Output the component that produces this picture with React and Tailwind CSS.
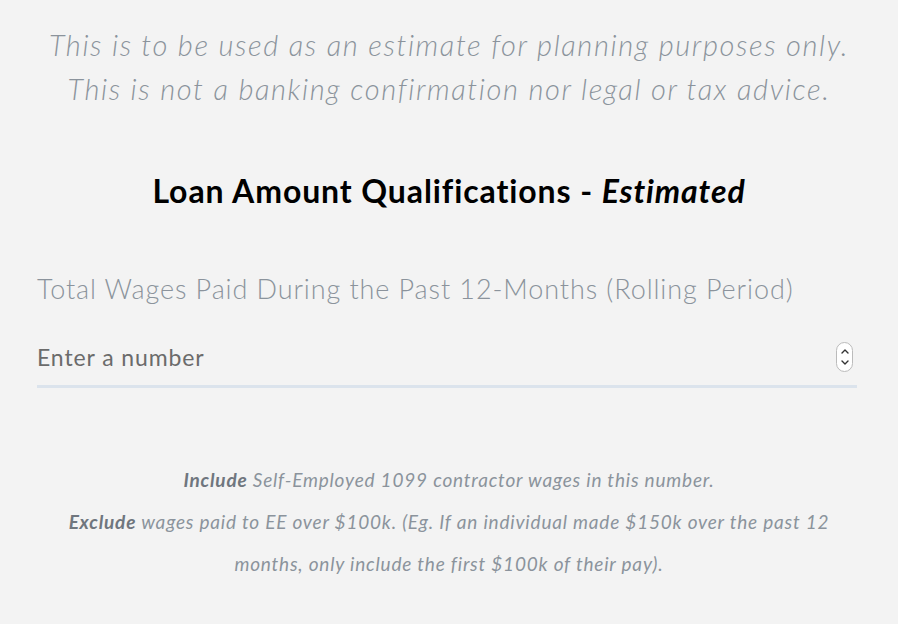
export default function App() {
  return (
    <div className="min-h-[624px] w-full bg-[#f3f3f3] font-['Lato',sans-serif] text-[#222]">
      <div className="pt-[23px] text-center text-[29px] font-light italic leading-[44px] tracking-[1.6px] text-[#8b939c]">
        <p>This is to be used as an estimate for planning purposes only.</p>
        <p>This is not a banking confirmation nor legal or tax advice.</p>
      </div>

      <h2 className="mt-[60px] text-center text-[32px] font-bold leading-[40px] tracking-[0.9px] text-black">
        Loan Amount Qualifications - <span className="italic">Estimated</span>
      </h2>

      <div className="ml-[37px] mr-[41px] mt-[60px]">
        <label className="block text-[27px] font-light leading-[36px] tracking-[0.9px] text-[#8b939c]">
          Total Wages Paid During the Past 12-Months (Rolling Period)
        </label>
        <div className="mt-[35px] flex items-center justify-between border-b-[3px] border-[#dbe3ec] pb-[13px]">
          <span className="text-[23px] leading-[30px] tracking-[0.9px] text-[#6b6b6b]">Enter a number</span>
          <div className="mr-[4px] flex h-[30px] w-[17px] flex-col items-center justify-center rounded-full border border-[#bbb] bg-white">
            <svg width="10" height="22" viewBox="0 0 10 22" fill="none" stroke="#333" strokeWidth="1.4" strokeLinecap="round" strokeLinejoin="round">
              <path d="M2 7 L5 4 L8 7" />
              <path d="M2 15 L5 18 L8 15" />
            </svg>
          </div>
        </div>
      </div>

      <div className="mx-auto mt-[71px] max-w-[790px] text-center text-[19px] italic leading-[42px] tracking-[0.8px] text-[#8b939c]">
        <p>
          <span className="font-bold text-[#6f767e]">Include</span> Self-Employed 1099 contractor wages in this number.
        </p>
        <p>
          <span className="font-bold text-[#6f767e]">Exclude</span> wages paid to EE over $100k. (Eg. If an individual made $150k over the past 12 months, only include the first $100k of their pay).
        </p>
      </div>
    </div>
  )
}
